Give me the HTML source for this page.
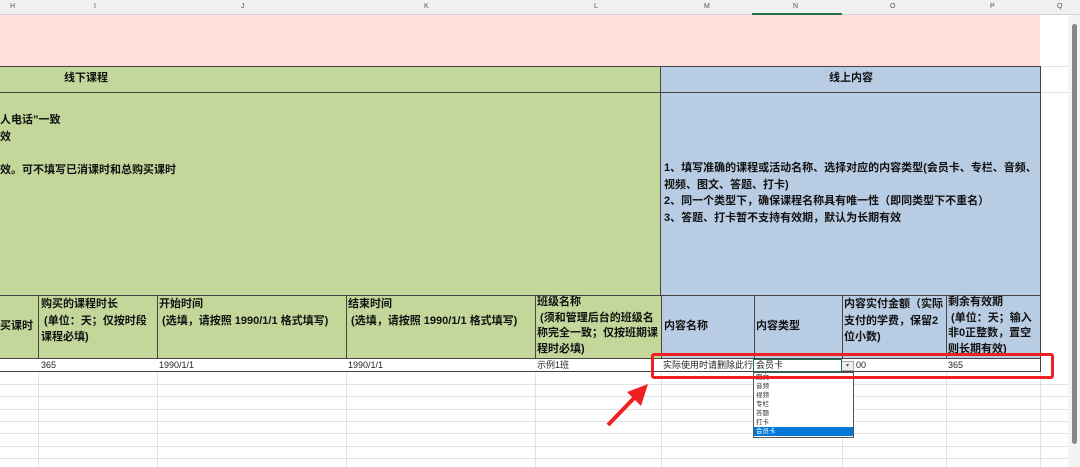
<!DOCTYPE html><html><head><meta charset="utf-8"><style>
body{margin:0;width:1080px;height:467px;overflow:hidden;background:#fff;font-family:"Liberation Sans","Noto Sans CJK SC",sans-serif;position:relative}
.a{position:absolute;box-sizing:border-box}
.hd{font-size:7px;color:#555;text-align:center;top:3px}
.b{font-weight:bold;font-size:11px;color:#111;line-height:16.5px}
.s{font-size:9px;color:#222;line-height:13px}
.gl{position:absolute;left:0;width:1068px;height:1px;background:#e2e2e2}
.gv{position:absolute;top:372px;height:95px;width:1px;background:#e2e2e2}
.dd{font-size:6.5px;color:#333;line-height:9px;padding-left:2px}
</style></head><body>
<div class="a" style="left:0;top:0;width:1080px;height:15px;background:#f0f0f0;border-bottom:1px solid #d4d4d4"></div>
<div class="a hd" style="left:10px">H</div><div class="a hd" style="left:94px">I</div><div class="a hd" style="left:241px">J</div><div class="a hd" style="left:424px">K</div><div class="a hd" style="left:594px">L</div><div class="a hd" style="left:704px">M</div><div class="a hd" style="left:793px">N</div><div class="a hd" style="left:890px">O</div><div class="a hd" style="left:990px">P</div><div class="a hd" style="left:1057px">Q</div>
<div class="a" style="left:752px;top:13px;width:90px;height:2px;background:#217346"></div>
<div class="a" style="left:0;top:15px;width:1040px;height:51px;background:#ffdedc"></div>
<div class="a" style="left:0;top:66px;width:661px;height:229px;background:#c4d79b;border-top:1px solid #444;border-right:1px solid #444"></div>
<div class="a" style="left:0;top:92px;width:661px;height:1px;background:#444"></div>
<div class="a" style="left:661px;top:66px;width:380px;height:229px;background:#b8cce4;border-top:1px solid #444;border-right:1px solid #444"></div>
<div class="a" style="left:661px;top:92px;width:380px;height:1px;background:#444"></div>
<div class="a b" style="left:64px;top:70px">线下课程</div>
<div class="a b" style="left:829px;top:70px">线上内容</div>
<div class="a b" style="left:0;top:112px">人电话”一致<br>效<br><br>效。可不填写已消课时和总购买课时</div>
<div class="a b" style="left:664px;top:160px;width:375px">1、填写准确的课程或活动名称、选择对应的内容类型(会员卡、专栏、音频、视频、图文、答题、打卡)<br>2、同一个类型下，确保课程名称具有唯一性（即同类型下不重名）<br>3、答题、打卡暂不支持有效期，默认为长期有效</div>
<div class="a" style="left:0;top:295px;width:661px;height:63px;background:#c4d79b;border-top:1px solid #444"></div>
<div class="a" style="left:661px;top:295px;width:380px;height:63px;background:#b8cce4;border-top:1px solid #444;border-right:1px solid #444"></div>
<div class="a" style="left:38px;top:295px;width:1px;height:77px;background:#444"></div>
<div class="a" style="left:157px;top:295px;width:1px;height:77px;background:#444"></div>
<div class="a" style="left:346px;top:295px;width:1px;height:77px;background:#444"></div>
<div class="a" style="left:535px;top:295px;width:1px;height:77px;background:#444"></div>
<div class="a" style="left:661px;top:295px;width:1px;height:77px;background:#444"></div>
<div class="a" style="left:754px;top:295px;width:1px;height:77px;background:#444"></div>
<div class="a" style="left:842px;top:295px;width:1px;height:77px;background:#444"></div>
<div class="a" style="left:946px;top:295px;width:1px;height:77px;background:#444"></div>
<div class="a b" style="left:0;top:318px">买课时</div>
<div class="a b" style="left:41px;top:296px;width:114px">购买的课程时长<br>&nbsp;(单位：天；仅按时段课程必填)</div>
<div class="a b" style="left:159px;top:296px;width:178px">开始时间<br>&nbsp;(选填，请按照 1990/1/1 格式填写)</div>
<div class="a b" style="left:348px;top:296px;width:178px">结束时间<br>&nbsp;(选填，请按照 1990/1/1 格式填写)</div>
<div class="a b" style="left:537px;top:295px;width:122px;height:62px;overflow:hidden;line-height:15.5px">班级名称<br>&nbsp;(须和管理后台的班级名称完全一致；仅按班期课程时必填)</div>
<div class="a b" style="left:664px;top:318px">内容名称</div>
<div class="a b" style="left:756px;top:318px">内容类型</div>
<div class="a b" style="left:844px;top:296px;width:100px">内容实付金额（实际支付的学费，保留2位小数)</div>
<div class="a b" style="left:948px;top:295px;width:90px;height:62px;overflow:hidden;line-height:15.5px">剩余有效期<br>&nbsp;(单位：天；输入非0正整数，置空则长期有效)</div>
<div class="a" style="left:0;top:358px;width:1041px;height:14px;background:#fff;border-top:1px solid #444;border-bottom:1px solid #444;border-right:1px solid #444"></div>
<div class="a s" style="left:41px;top:359px">365</div>
<div class="a s" style="left:159px;top:359px">1990/1/1</div>
<div class="a s" style="left:348px;top:359px">1990/1/1</div>
<div class="a s" style="left:537px;top:359px">示例1班</div>
<div class="a s" style="left:663px;top:359px">实际使用时请删除此行</div>
<div class="a s" style="left:756px;top:359px">会员卡</div>
<div class="a" style="left:841px;top:361px;width:13px;height:10px;background:#eee;border:1px solid #aaa;font-size:6px;text-align:center;line-height:8px;color:#555">▾</div>
<div class="a s" style="left:856px;top:359px">00</div>
<div class="a s" style="left:948px;top:359px">365</div>
<div class="a" style="left:753px;top:359px;width:89px;height:13px;border:1px solid #217346"></div>
<div class="gl" style="top:384px"></div><div class="gl" style="top:396px"></div><div class="gl" style="top:409px"></div><div class="gl" style="top:421px"></div><div class="gl" style="top:433px"></div><div class="gl" style="top:446px"></div><div class="gl" style="top:458px"></div>
<div class="gl" style="top:66px;left:1041px;width:27px"></div><div class="gl" style="top:92px;left:1041px;width:27px"></div>
<div class="gv" style="left:38px"></div><div class="gv" style="left:157px"></div><div class="gv" style="left:346px"></div><div class="gv" style="left:535px"></div><div class="gv" style="left:661px"></div><div class="gv" style="left:842px"></div><div class="gv" style="left:946px"></div><div class="gv" style="left:1040px"></div>
<div class="a" style="left:1068px;top:15px;width:12px;height:452px;background:#f4f4f4"></div>
<div class="a" style="left:1072px;top:24px;width:5px;height:420px;background:#888;border-radius:3px"></div>
<div class="a" style="left:753px;top:372px;width:101px;height:66px;background:#fff;border:1px solid #555">
<div class="dd">图文</div><div class="dd">音频</div><div class="dd">视频</div><div class="dd">专栏</div><div class="dd">答题</div><div class="dd">打卡</div><div class="dd" style="background:#0078d7;color:#fff">会员卡</div></div>
<div class="a" style="left:651px;top:353px;width:403px;height:26px;border:3px solid #f02020;border-radius:3px"></div>
<svg class="a" style="left:600px;top:380px" width="60" height="50"><line x1="8" y1="45" x2="36" y2="16" stroke="#f02020" stroke-width="4"/><polygon points="48,4 27,12 41,26" fill="#f02020"/></svg>
</body></html>
